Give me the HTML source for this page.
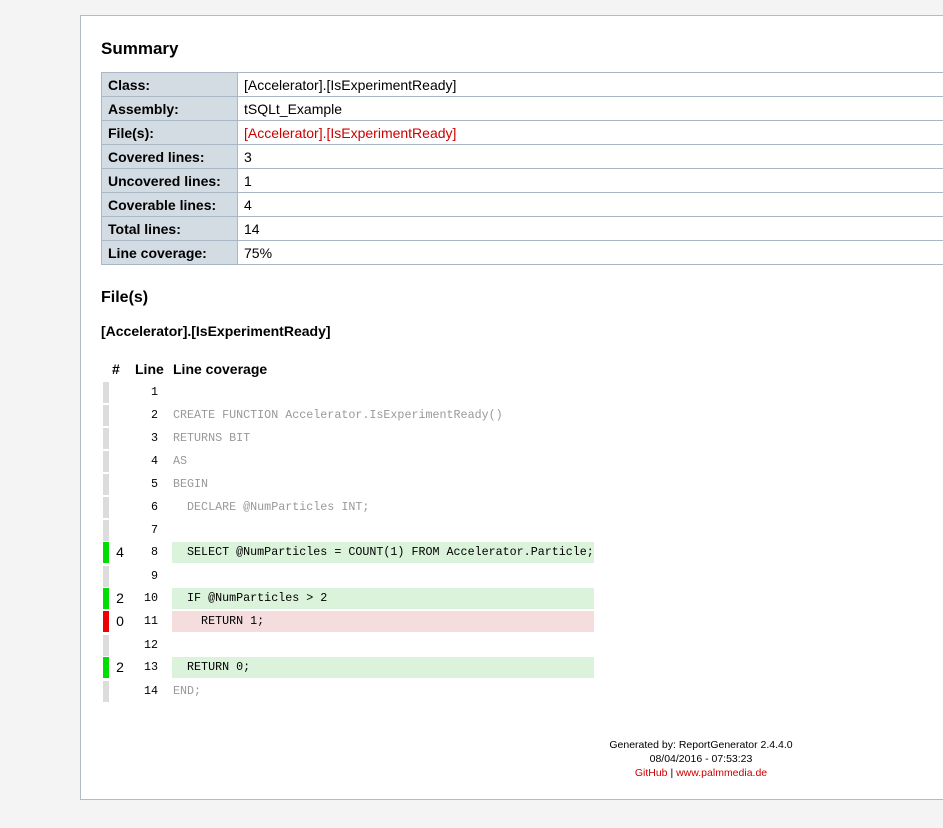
<!DOCTYPE html>
<html><head><meta charset="utf-8"><style>
body{margin:0;background:#f4f4f4;font-family:"Liberation Sans",Arial,sans-serif;width:943px;height:828px;overflow:hidden;position:relative}
.c{position:absolute;left:80px;top:15px;width:900px;height:783px;background:#fff;border:1px solid #b0bcc6}
h1{position:absolute;left:101px;top:39px;margin:0;font-size:17px;font-weight:bold;color:#000}
h2{position:absolute;left:101px;top:289px;margin:0;font-size:16px;font-weight:bold}
h3{position:absolute;left:101px;top:323px;margin:0;font-size:14px;font-weight:bold}
table{position:absolute;left:101px;top:72px;border-collapse:collapse;width:900px;font-size:14px}
td{border:1px solid #a9b8c4;height:23px;padding:1px 6px 0 6px;line-height:22px;box-sizing:border-box}
td.k{background:#d3dbe3;font-weight:bold;width:136px}
.red{color:#c00}
.hd{position:absolute;top:361px;font-size:14px;font-weight:bold}
.r{position:absolute;left:0;height:21px;width:943px}
.bar{position:absolute;left:103px;width:6px;height:21px;background:#dcdcdc}
.n{position:absolute;left:110px;width:20px;text-align:center;font-size:14px;line-height:21px}
.ln{position:absolute;left:130px;width:28px;text-align:right;font-family:"Liberation Mono",monospace;font-size:11.7px;line-height:21px}
.code{position:absolute;left:172px;width:422px;height:21px;font-family:"Liberation Mono",monospace;font-size:11.7px;line-height:21px;white-space:pre;color:#999;padding-left:1px;box-sizing:border-box}
.g .code{background:#dbf2db;color:#000}.g .bar{background:#0d0}
.rd .code{background:#f5dddd;color:#000}.rd .bar{background:#e00}
.ft{position:absolute;left:590px;width:222px;top:738px;text-align:center;font-size:10.5px;line-height:14px}
</style></head><body>
<div class="c"></div>
<h1>Summary</h1>
<table>
<tr><td class="k">Class:</td><td>[Accelerator].[IsExperimentReady]</td></tr>
<tr><td class="k">Assembly:</td><td>tSQLt_Example</td></tr>
<tr><td class="k">File(s):</td><td class="red">[Accelerator].[IsExperimentReady]</td></tr>
<tr><td class="k">Covered lines:</td><td>3</td></tr>
<tr><td class="k">Uncovered lines:</td><td>1</td></tr>
<tr><td class="k">Coverable lines:</td><td>4</td></tr>
<tr><td class="k">Total lines:</td><td>14</td></tr>
<tr><td class="k">Line coverage:</td><td>75%</td></tr>
</table>
<h2>File(s)</h2>
<h3>[Accelerator].[IsExperimentReady]</h3>
<div class="hd" style="left:112px">#</div>
<div class="hd" style="left:135px">Line</div>
<div class="hd" style="left:173px">Line coverage</div>

<div class="r" style="top:382px"><div class="bar"></div><div class="n"></div><div class="ln">1</div><div class="code"></div></div>
<div class="r" style="top:405px"><div class="bar"></div><div class="n"></div><div class="ln">2</div><div class="code">CREATE FUNCTION Accelerator.IsExperimentReady()</div></div>
<div class="r" style="top:428px"><div class="bar"></div><div class="n"></div><div class="ln">3</div><div class="code">RETURNS BIT</div></div>
<div class="r" style="top:451px"><div class="bar"></div><div class="n"></div><div class="ln">4</div><div class="code">AS</div></div>
<div class="r" style="top:474px"><div class="bar"></div><div class="n"></div><div class="ln">5</div><div class="code">BEGIN</div></div>
<div class="r" style="top:497px"><div class="bar"></div><div class="n"></div><div class="ln">6</div><div class="code">  DECLARE @NumParticles INT;</div></div>
<div class="r" style="top:520px"><div class="bar"></div><div class="n"></div><div class="ln">7</div><div class="code"></div></div>
<div class="r g" style="top:542px"><div class="bar"></div><div class="n">4</div><div class="ln">8</div><div class="code">  SELECT @NumParticles = COUNT(1) FROM Accelerator.Particle;</div></div>
<div class="r" style="top:566px"><div class="bar"></div><div class="n"></div><div class="ln">9</div><div class="code"></div></div>
<div class="r g" style="top:588px"><div class="bar"></div><div class="n">2</div><div class="ln">10</div><div class="code">  IF @NumParticles &gt; 2</div></div>
<div class="r rd" style="top:611px"><div class="bar"></div><div class="n">0</div><div class="ln">11</div><div class="code">    RETURN 1;</div></div>
<div class="r" style="top:635px"><div class="bar"></div><div class="n"></div><div class="ln">12</div><div class="code"></div></div>
<div class="r g" style="top:657px"><div class="bar"></div><div class="n">2</div><div class="ln">13</div><div class="code">  RETURN 0;</div></div>
<div class="r" style="top:681px"><div class="bar"></div><div class="n"></div><div class="ln">14</div><div class="code">END;</div></div>

<div class="ft">Generated by: ReportGenerator 2.4.4.0<br>08/04/2016 - 07:53:23<br><span class="red">GitHub</span> | <span class="red">www.palmmedia.de</span></div>
</body></html>
